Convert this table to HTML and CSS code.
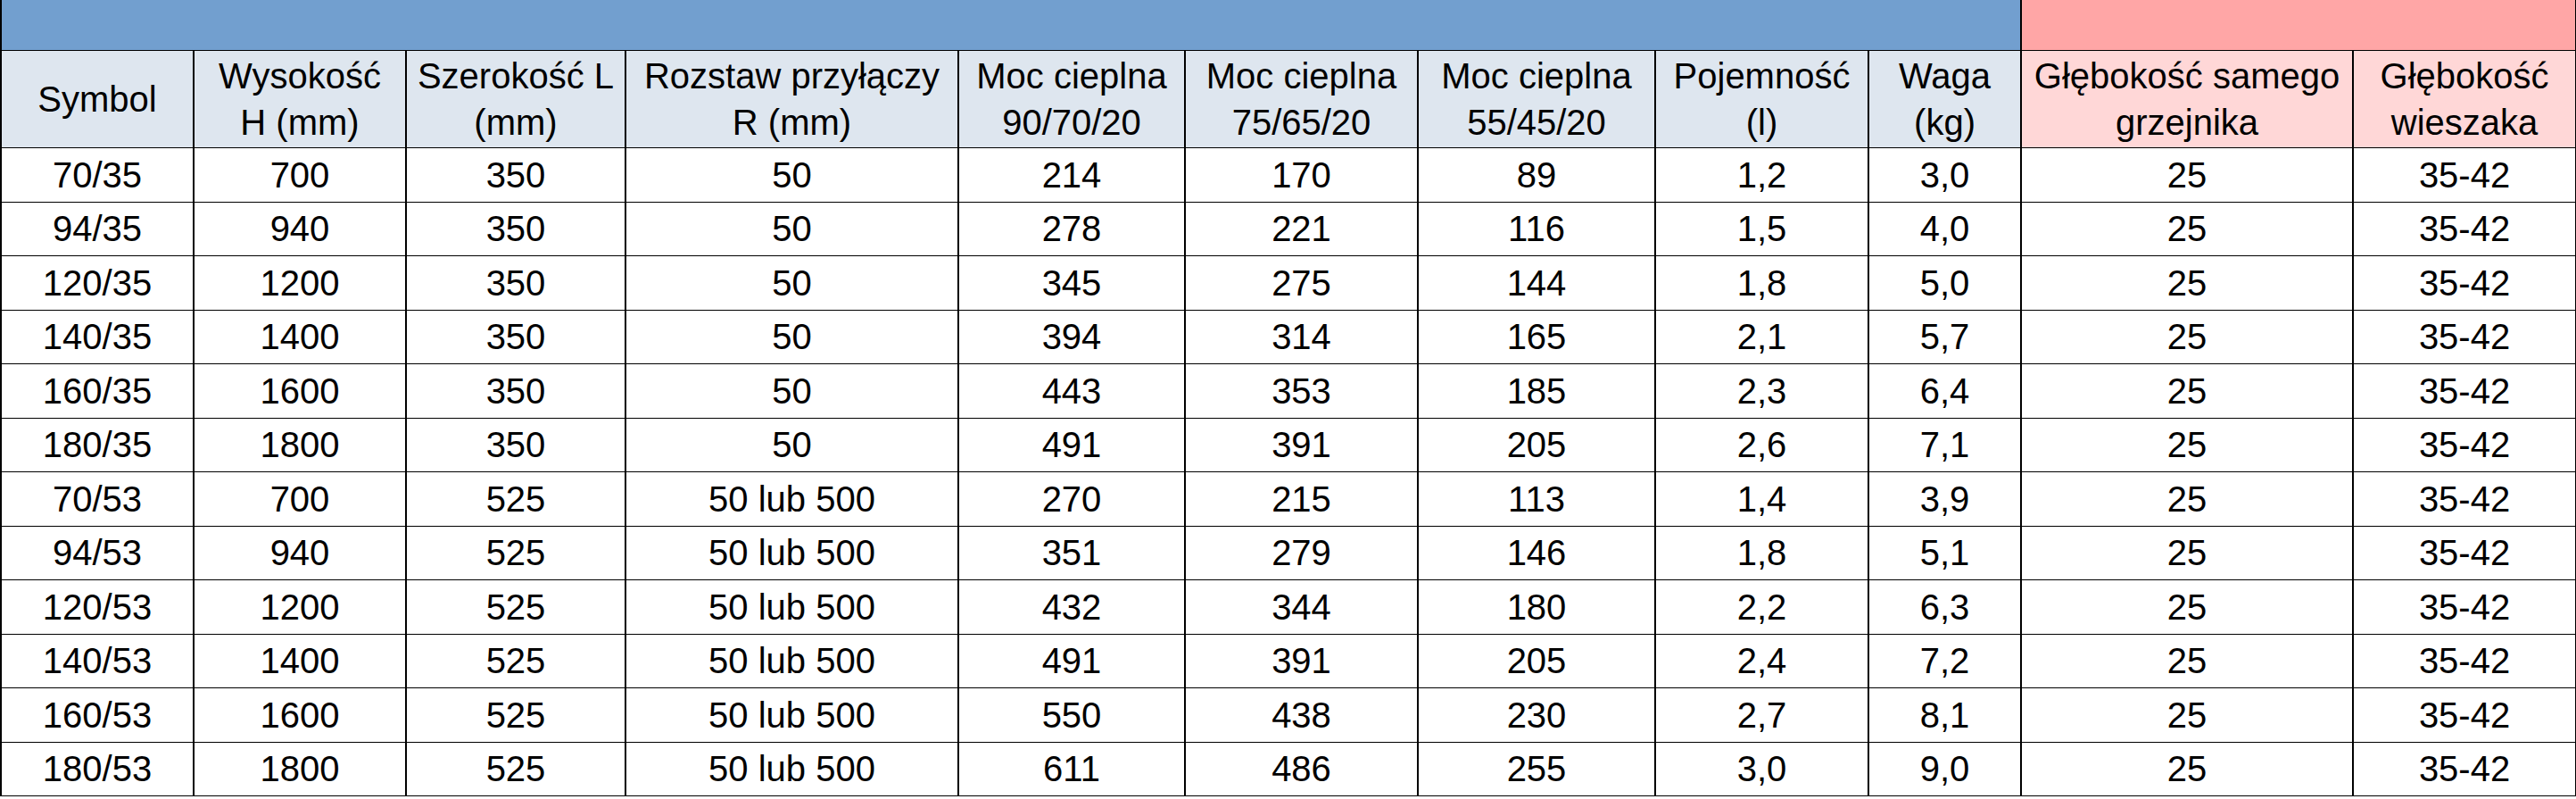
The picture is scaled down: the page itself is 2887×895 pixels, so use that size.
FILE: index.html
```html
<!DOCTYPE html>
<html lang="pl">
<head>
<meta charset="utf-8">
<title>Tabela grzejników</title>
<link rel="stylesheet" href="styles.css">
</head>
<body>
<table class="spec">
  <colgroup>
    <col class="c1"><col class="c2"><col class="c3"><col class="c4"><col class="c5"><col class="c6"><col class="c7"><col class="c8"><col class="c9"><col class="c10"><col class="c11">
  </colgroup>
  <thead>
    <tr class="band">
      <td class="band-blue" colspan="9"></td>
      <td class="band-pink" colspan="2"></td>
    </tr>
    <tr class="head">
      <th>Symbol</th>
      <th>Wysokość<br>H (mm)</th>
      <th>Szerokość L<br>(mm)</th>
      <th>Rozstaw przyłączy<br>R (mm)</th>
      <th>Moc cieplna<br>90/70/20</th>
      <th>Moc cieplna<br>75/65/20</th>
      <th>Moc cieplna<br>55/45/20</th>
      <th>Pojemność<br>(l)</th>
      <th>Waga<br>(kg)</th>
      <th class="pink">Głębokość samego<br>grzejnika</th>
      <th class="pink">Głębokość<br>wieszaka</th>
    </tr>
  </thead>
  <tbody>
    <tr><td>70/35</td><td>700</td><td>350</td><td>50</td><td>214</td><td>170</td><td>89</td><td>1,2</td><td>3,0</td><td>25</td><td>35-42</td></tr>
    <tr><td>94/35</td><td>940</td><td>350</td><td>50</td><td>278</td><td>221</td><td>116</td><td>1,5</td><td>4,0</td><td>25</td><td>35-42</td></tr>
    <tr><td>120/35</td><td>1200</td><td>350</td><td>50</td><td>345</td><td>275</td><td>144</td><td>1,8</td><td>5,0</td><td>25</td><td>35-42</td></tr>
    <tr><td>140/35</td><td>1400</td><td>350</td><td>50</td><td>394</td><td>314</td><td>165</td><td>2,1</td><td>5,7</td><td>25</td><td>35-42</td></tr>
    <tr><td>160/35</td><td>1600</td><td>350</td><td>50</td><td>443</td><td>353</td><td>185</td><td>2,3</td><td>6,4</td><td>25</td><td>35-42</td></tr>
    <tr><td>180/35</td><td>1800</td><td>350</td><td>50</td><td>491</td><td>391</td><td>205</td><td>2,6</td><td>7,1</td><td>25</td><td>35-42</td></tr>
    <tr><td>70/53</td><td>700</td><td>525</td><td>50 lub 500</td><td>270</td><td>215</td><td>113</td><td>1,4</td><td>3,9</td><td>25</td><td>35-42</td></tr>
    <tr><td>94/53</td><td>940</td><td>525</td><td>50 lub 500</td><td>351</td><td>279</td><td>146</td><td>1,8</td><td>5,1</td><td>25</td><td>35-42</td></tr>
    <tr><td>120/53</td><td>1200</td><td>525</td><td>50 lub 500</td><td>432</td><td>344</td><td>180</td><td>2,2</td><td>6,3</td><td>25</td><td>35-42</td></tr>
    <tr><td>140/53</td><td>1400</td><td>525</td><td>50 lub 500</td><td>491</td><td>391</td><td>205</td><td>2,4</td><td>7,2</td><td>25</td><td>35-42</td></tr>
    <tr><td>160/53</td><td>1600</td><td>525</td><td>50 lub 500</td><td>550</td><td>438</td><td>230</td><td>2,7</td><td>8,1</td><td>25</td><td>35-42</td></tr>
    <tr><td>180/53</td><td>1800</td><td>525</td><td>50 lub 500</td><td>611</td><td>486</td><td>255</td><td>3,0</td><td>9,0</td><td>25</td><td>35-42</td></tr>
  </tbody>
</table>
</body>
</html>
```
FILE: styles.css
```css
html, body {
  margin: 0;
  padding: 0;
  background: #ffffff;
}

.spec {
  border-collapse: collapse;
  table-layout: fixed;
  width: 2886px;
  font-family: "Liberation Sans", Arial, sans-serif;
  font-size: 40px;
  color: #000000;
}

.c1 { width: 216px; }
.c2 { width: 238px; }
.c3 { width: 246px; }
.c4 { width: 373px; }
.c5 { width: 254px; }
.c6 { width: 261px; }
.c7 { width: 266px; }
.c8 { width: 239px; }
.c9 { width: 171px; }
.c10 { width: 372px; }
.c11 { width: 250px; }

.spec td,
.spec th {
  padding: 0;
  text-align: center;
  vertical-align: middle;
  white-space: nowrap;
  border-top: 1px solid #000000;
  border-bottom: 1px solid #000000;
  border-left: 2px solid #000000;
  border-right: 2px solid #000000;
}

.band td {
  height: 56px;
  border-top: none;
}

.band-blue {
  background: #729fcf;
}

.band-pink {
  background: #ffa6a6;
}

.band .band-blue {
  border-right: 1px solid #9fa8c8;
}

.head th {
  height: 108px;
  font-weight: normal;
  line-height: 52px;
  background: #dee6ef;
}

.head th.pink {
  background: #ffd7d7;
}

.spec tbody td {
  height: 59.5px;
  line-height: 46px;
}
```
